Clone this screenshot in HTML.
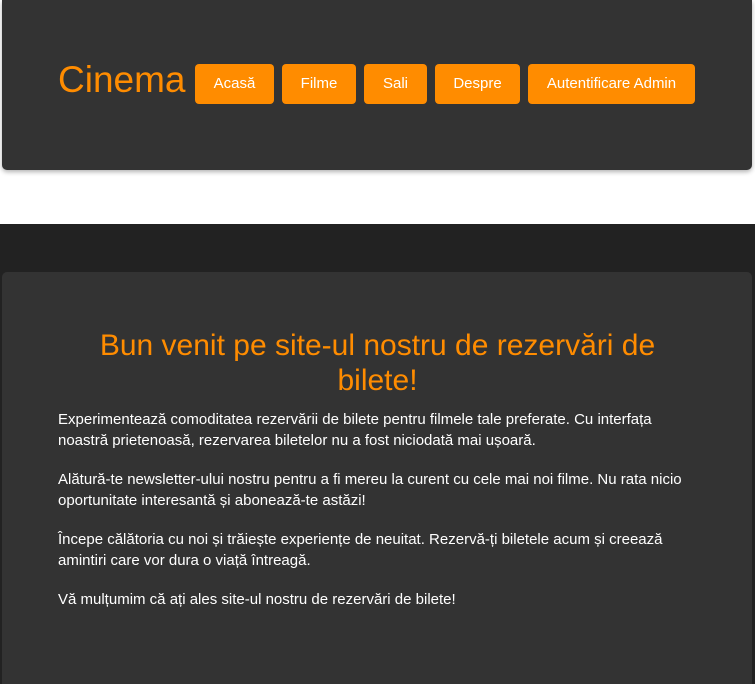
<!DOCTYPE html>
<html><head><meta charset="utf-8"><style>
*{margin:0;padding:0;box-sizing:border-box}
html,body{width:755px;height:684px;overflow:hidden;background:#222;font-family:"Liberation Sans",Arial,sans-serif}
.top{position:absolute;left:0;top:0;width:755px;height:224px;background:#fff}
header{position:absolute;left:2px;top:0;width:750px;height:170px;background:#333;border-radius:0 0 5px 5px;box-shadow:0 2px 5px rgba(0,0,0,.3)}
.logo{position:absolute;left:56px;top:58px;color:#ff8c00;font-size:37px;line-height:44px}
.btn{position:absolute;top:64px;height:40px;background:#ff8c00;color:#fff;border-radius:4px;font-size:15px;line-height:40px;text-align:center}
.card{position:absolute;left:2px;top:272px;width:750px;height:412px;background:#333;border-radius:5px 5px 0 0}
h1{position:absolute;left:75px;top:56px;width:601px;text-align:center;color:#ff8c00;font-weight:normal;font-size:30px;line-height:35px}
.txt{position:absolute;left:56px;top:137px;width:640px;color:#fff;font-size:15px;line-height:21px}
.txt p{margin-bottom:18px}
</style></head><body>
<div class="top"></div>
<header>
<div class="logo">Cinema</div>
<div class="btn" style="left:193px;width:79px">Acasă</div>
<div class="btn" style="left:280px;width:74px">Filme</div>
<div class="btn" style="left:362px;width:63px">Sali</div>
<div class="btn" style="left:433px;width:85px">Despre</div>
<div class="btn" style="left:526px;width:167px">Autentificare Admin</div>
</header>
<div class="card">
<h1>Bun venit pe site-ul nostru de rezervări de bilete!</h1>
<div class="txt">
<p>Experimentează comoditatea rezervării de bilete pentru filmele tale preferate. Cu interfața noastră prietenoasă, rezervarea biletelor nu a fost niciodată mai ușoară.</p>
<p>Alătură-te newsletter-ului nostru pentru a fi mereu la curent cu cele mai noi filme. Nu rata nicio oportunitate interesantă și abonează-te astăzi!</p>
<p>Începe călătoria cu noi și trăiește experiențe de neuitat. Rezervă-ți biletele acum și creează amintiri care vor dura o viață întreagă.</p>
<p>Vă mulțumim că ați ales site-ul nostru de rezervări de bilete!</p>
</div>
</div>
</body></html>
